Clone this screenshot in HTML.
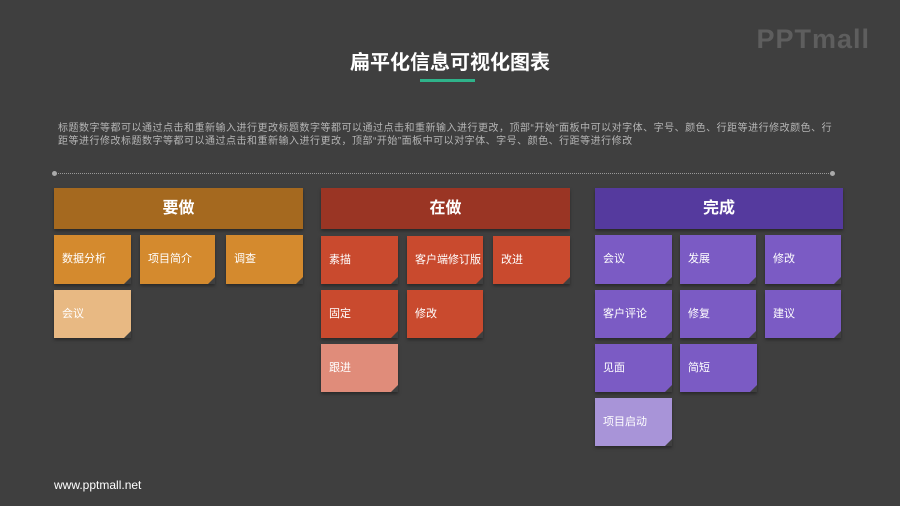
<!DOCTYPE html>
<html><head><meta charset="utf-8"><style>
body{margin:0;width:900px;height:506px;background:#3f3f3f;position:relative;overflow:hidden;font-family:"Liberation Sans","Noto Sans CJK SC",sans-serif;}
.a{position:absolute;}
.h{position:absolute;height:41px;color:#fff;font-weight:bold;font-size:16px;line-height:41px;text-align:center;box-shadow:0 2px 3px rgba(0,0,0,.35);}
.c{position:absolute;color:#fff;font-size:11px;line-height:13px;box-sizing:border-box;display:flex;align-items:center;padding-left:8px;box-shadow:0 2px 3px rgba(0,0,0,.35);}
.c:after{content:"";position:absolute;right:0;bottom:0;border-style:solid;border-width:0 0 7px 7px;border-color:transparent transparent #3f3f3f transparent;}
</style></head><body>
<div class="a" style="left:0;width:900px;top:46px;text-align:center;color:#fff;font-size:20px;font-weight:bold;">扁平化信息可视化图表</div>
<div class="a" style="left:420px;top:79px;width:55px;height:3px;background:#2fb38a;"></div>
<div class="a" style="right:30px;top:24px;color:#5e5e5e;font-size:27px;font-weight:bold;letter-spacing:1px;">PPTmall</div>
<div class="a" style="left:58px;top:122px;width:820px;color:#b5b5b5;font-size:10px;line-height:13px;letter-spacing:0.5px;white-space:nowrap;">标题数字等都可以通过点击和重新输入进行更改标题数字等都可以通过点击和重新输入进行更改，顶部“开始”面板中可以对字体、字号、颜色、行距等进行修改颜色、行<br>距等进行修改标题数字等都可以通过点击和重新输入进行更改，顶部“开始”面板中可以对字体、字号、颜色、行距等进行修改</div>
<div class="a" style="left:55px;top:173px;width:778px;border-top:1px dotted #999;"></div>
<div class="a" style="left:52px;top:171px;width:5px;height:5px;border-radius:50%;background:#aaa;"></div>
<div class="a" style="left:830px;top:171px;width:5px;height:5px;border-radius:50%;background:#aaa;"></div>

<div class="h" style="left:54px;top:188px;width:249px;background:#a5691f;">要做</div>
<div class="c" style="left:54px;top:235px;width:77px;height:49px;background:#d48a2e;">数据分析</div>
<div class="c" style="left:140px;top:235px;width:75px;height:49px;background:#d48a2e;">项目简介</div>
<div class="c" style="left:226px;top:235px;width:77px;height:49px;background:#d48a2e;">调查</div>
<div class="c" style="left:54px;top:290px;width:77px;height:48px;background:#e8b983;">会议</div>

<div class="h" style="left:321px;top:188px;width:249px;background:#9a3524;">在做</div>
<div class="c" style="left:321px;top:236px;width:77px;height:48px;background:#c94a2e;">素描</div>
<div class="c" style="left:407px;top:236px;width:76px;height:48px;background:#c94a2e;">客户端修订版</div>
<div class="c" style="left:493px;top:236px;width:77px;height:48px;background:#c94a2e;">改进</div>
<div class="c" style="left:321px;top:290px;width:77px;height:48px;background:#c94a2e;">固定</div>
<div class="c" style="left:407px;top:290px;width:76px;height:48px;background:#c94a2e;">修改</div>
<div class="c" style="left:321px;top:344px;width:77px;height:48px;background:#e08c7a;">跟进</div>

<div class="h" style="left:595px;top:188px;width:248px;background:#553a9e;">完成</div>
<div class="c" style="left:595px;top:235px;width:77px;height:49px;background:#7b5bc4;">会议</div>
<div class="c" style="left:680px;top:235px;width:76px;height:49px;background:#7b5bc4;">发展</div>
<div class="c" style="left:765px;top:235px;width:76px;height:49px;background:#7b5bc4;">修改</div>
<div class="c" style="left:595px;top:290px;width:77px;height:48px;background:#7b5bc4;">客户评论</div>
<div class="c" style="left:680px;top:290px;width:76px;height:48px;background:#7b5bc4;">修复</div>
<div class="c" style="left:765px;top:290px;width:76px;height:48px;background:#7b5bc4;">建议</div>
<div class="c" style="left:595px;top:344px;width:77px;height:48px;background:#7b5bc4;">见面</div>
<div class="c" style="left:680px;top:344px;width:77px;height:48px;background:#7b5bc4;">简短</div>
<div class="c" style="left:595px;top:398px;width:77px;height:48px;background:#a894d8;">项目启动</div>

<div class="a" style="left:54px;top:478px;color:#fff;font-size:12px;">www.pptmall.net</div>
</body></html>
